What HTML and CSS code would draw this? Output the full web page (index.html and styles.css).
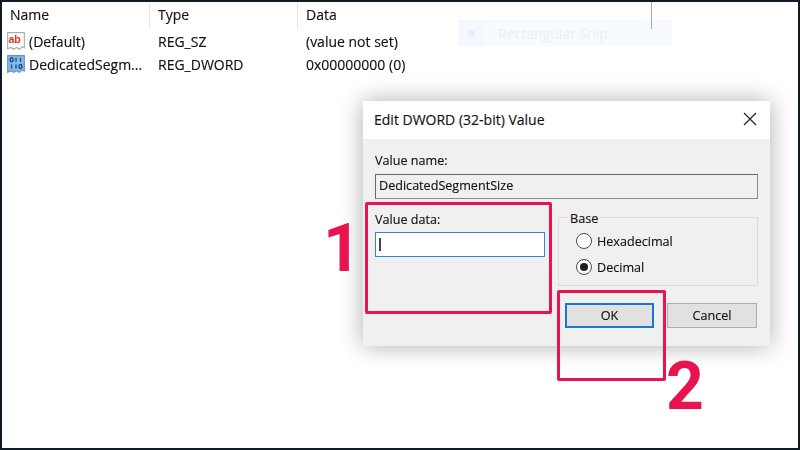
FILE: index.html
```html
<!DOCTYPE html>
<html lang="en">
<head>
<meta charset="utf-8">
<title>Edit DWORD (32-bit) Value</title>
<link rel="stylesheet" href="styles.css">
</head>
<body>
<div class="frame">
  <div class="ghost">
    <span class="ghost-icon"><span class="ghost-dot"></span></span>
    <span class="ghost-label">Rectangular Snip</span>
  </div>
  <div class="list">
    <div class="row head">
      <div class="col col-name sep">Name</div>
      <div class="col col-type sep">Type</div>
      <div class="col col-data sep-dark">Data</div>
    </div>
    <div class="row item">
      <div class="col col-name cell-icon">
        <svg class="icon" viewBox="0 0 18 18" width="20" height="20" aria-hidden="true">
          <path d="M1.5 1.5H16.5V15.2L14.5 14.2L12 16.5L9.5 14.8L7 16.5L4.5 14.8L1.5 16Z" fill="#fff" stroke="#a9a9a9"/>
          <text x="2.2" y="11.2" class="ab">ab</text>
        </svg>
        <span class="name">(Default)</span>
      </div>
      <div class="col col-type">REG_SZ</div>
      <div class="col col-data">(value not set)</div>
    </div>
    <div class="row item">
      <div class="col col-name cell-icon">
        <svg class="icon" viewBox="0 0 18 18" width="20" height="20" aria-hidden="true">
          <path d="M1.5 1.5H16.5V15.5L14.5 14.5L12 16.5L9.5 15L7 16.5L4.5 15L1.5 16.5Z" fill="#8cb8e4" stroke="#5f93c9"/>
          <g fill="none" stroke="#1c4f9c" stroke-width="1.3">
            <ellipse cx="5" cy="5.2" rx="1.3" ry="1.8"/>
            <path d="M9 3.4V7M13 3.4V7"/>
            <path d="M5 9.4V13M9 9.4V13"/>
            <ellipse cx="13" cy="11.2" rx="1.3" ry="1.8"/>
          </g>
        </svg>
        <span class="name">DedicatedSegm...</span>
      </div>
      <div class="col col-type">REG_DWORD</div>
      <div class="col col-data">0x00000000 (0)</div>
    </div>
  </div>

  <div class="dialog">
    <div class="titlebar">
      <span class="title">Edit DWORD (32-bit) Value</span>
      <svg class="close" viewBox="0 0 14 14" width="14" height="14" aria-hidden="true">
        <path d="M1 1L13 13M13 1L1 13" stroke="#222" stroke-width="1.2" fill="none"/>
      </svg>
    </div>
    <div class="body">
      <div class="label">Value name:</div>
      <div class="readonly">DedicatedSegmentSize</div>
      <div class="columns">
        <div class="left">
          <div class="label">Value data:</div>
          <div class="input"><span class="caret"></span></div>
        </div>
        <div class="right">
          <div class="group">
            <span class="legend">Base</span>
            <div class="radio-row"><span class="radio"></span><span>Hexadecimal</span></div>
            <div class="radio-row"><span class="radio on"></span><span>Decimal</span></div>
          </div>
          <div class="buttons">
            <div class="btn primary">OK</div>
            <div class="btn">Cancel</div>
          </div>
        </div>
      </div>
    </div>
  </div>

  <div class="mark mark-1"></div>
  <div class="mark mark-2"></div>
  <div class="num num-1">1</div>
  <div class="num num-2">2</div>
</div>
</body>
</html>
```

FILE: styles.css
```css
* { box-sizing: border-box; }
html, body { margin: 0; padding: 0; background: #fff; }
body { width: 800px; height: 450px; overflow: hidden; }

.frame {
  position: relative;
  width: 800px;
  height: 450px;
  background: #fff;
  border: solid #101b27;
  border-width: 2px;
  font-family: "Open Sans", "Noto Sans", sans-serif;
  font-size: 14px;
  color: #111;
}

/* registry list */
.list { filter: blur(0.35px); -webkit-text-stroke: 0.15px #111; }
.row { display: flex; }
.head { height: 27px; }
.item { height: 23px; align-items: center; }
.head .col { padding-top: 3px; }
.item .col-type, .item .col-data, .item .name { padding-top: 1px; }
.col { white-space: nowrap; }
.col-name { width: 148px; padding-left: 8px; }
.col-type { width: 148px; padding-left: 8px; }
.col-data { width: 354px; padding-left: 8px; }
.sep { border-right: 1px solid #e6e6e6; }
.sep-dark { border-right: 1px solid #a8a8a8; }
.cell-icon { display: flex; align-items: center; padding-left: 4px; gap: 3px; }
.icon { flex: none; }
.ab { font: bold 9.5px "Liberation Sans", sans-serif; fill: #d8341d; stroke: none; }

/* ghost of the snipping menu */
.ghost {
  position: absolute;
  left: 456px;
  top: 18px;
  width: 214px;
  height: 26px;
  display: flex;
  align-items: center;
  background: #f7faff;
}
.ghost-icon {
  width: 27px;
  height: 26px;
  background: #f3f8ff;
  display: flex;
  align-items: center;
  justify-content: center;
}
.ghost-dot { width: 7px; height: 7px; border-radius: 50%; background: #e9edf3; }
.ghost-label { margin-left: 13px; font-size: 14px; color: #eceff5; }

/* dialog */
.dialog {
  position: absolute;
  left: 361px;
  top: 99px;
  width: 407px;
  height: 245px;
  background: #f0f0f0;
  box-shadow: 0 0 22px rgba(0, 0, 0, 0.32);
  filter: blur(0.3px);
  font-size: 12.6px;
  -webkit-text-stroke: 0.15px #111;
}
.titlebar {
  height: 38px;
  background: #fff;
  display: flex;
  align-items: center;
  justify-content: space-between;
  padding: 0 13px 2px 11px;
}
.title { font-size: 14px; }
.body { padding: 12px 12px 0; }
.label { height: 18px; line-height: 18px; padding-top: 1px; }
.readonly {
  margin-top: 5px;
  height: 25px;
  line-height: 21px;
  padding-left: 3px;
  background: #f0f0f0;
  border: 1px solid #8a8a8a;
  border-top-color: #666;
  border-left-color: #666;
}
.columns { display: flex; gap: 13px; margin-top: 11px; }
.left { width: 170px; }
.input {
  margin-top: 4px;
  height: 25px;
  background: #fff;
  border: 1px solid #2f86d8;
  padding: 5px 3px;
}
.caret { display: block; width: 1.5px; height: 13px; background: #444; }
.right { width: 200px; }
.group {
  position: relative;
  margin-top: 7px;
  height: 69px;
  border: 1px solid #dcdcdc;
  padding: 10px 0 0 17px;
}
.legend {
  position: absolute;
  left: 9px;
  top: -8px;
  padding: 0 2px;
  line-height: 18px;
  background: #f0f0f0;
}
.radio-row { display: flex; align-items: center; gap: 5px; height: 26px; }
.radio {
  position: relative;
  width: 16px;
  height: 16px;
  border-radius: 50%;
  background: #fff;
  border: 1px solid #4a4a4a;
}
.radio.on::after {
  content: "";
  position: absolute;
  left: 3px;
  top: 3px;
  width: 8px;
  height: 8px;
  border-radius: 50%;
  background: #222;
}
.buttons { display: flex; gap: 13px; margin-top: 17px; padding-left: 7px; }
.btn {
  width: 90px;
  height: 25px;
  line-height: 23px;
  text-align: center;
  background: #e1e1e1;
  border: 1px solid #adadad;
}
.primary { width: 89px; line-height: 21px; border: 2px solid #1a76d2; }

/* tutorial annotations */
.mark {
  position: absolute;
  border: 3px solid #e8134f;
  border-radius: 2px;
}
.mark-1 { left: 363px; top: 200px; width: 187px; height: 112px; }
.mark-2 { left: 555px; top: 288px; width: 109px; height: 91px; }
.num {
  position: absolute;
  font-family: Roboto, "Liberation Sans", sans-serif;
  font-weight: 700;
  font-size: 66px;
  line-height: 66px;
  color: #e8134f;
}
.num-1 { left: 321px; top: 214px; }
.num-2 { left: 664px; top: 352px; }
```
